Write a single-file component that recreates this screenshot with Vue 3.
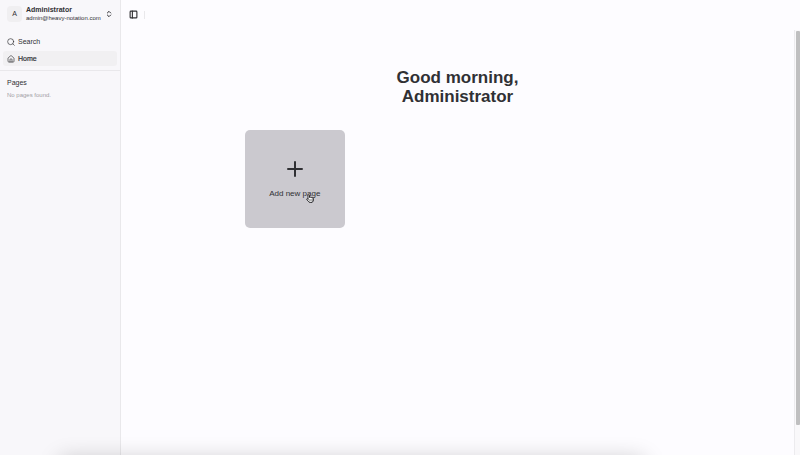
<script setup>
import { ref } from 'vue'

const user = { name: 'Administrator', email: 'admin@heavy-notation.com' }
const pages = ref([])
const sidebarOpen = ref(true)

function addPage() {
  pages.value.push({ id: pages.value.length + 1, title: 'Untitled' })
}
</script>

<template>
  <div class="app">
    <aside v-show="sidebarOpen" class="sidebar">
      <button class="account" type="button">
        <span class="avatar">{{ user.name[0] }}</span>
        <span class="identity">
          <strong class="name">{{ user.name }}</strong>
          <span class="email">{{ user.email }}</span>
        </span>
        <svg class="chevrons" viewBox="0 0 24 24"><path d="m7 15 5 5 5-5M7 9l5-5 5 5" /></svg>
      </button>
      <nav class="nav">
        <button class="item" type="button">
          <svg viewBox="0 0 24 24"><circle cx="11" cy="11" r="9" /><path d="m22 22-4.300-4.300" /></svg>
          <span>Search</span>
        </button>
        <a class="item active" href="#">
          <svg viewBox="0 0 24 24">
            <path d="M15 21v-8a1 1 0 0 0-1-1h-4a1 1 0 0 0-1 1v8" />
            <path d="M3 10a2 2 0 0 1 .7-1.5l7-6a2 2 0 0 1 2.6 0l7 6A2 2 0 0 1 21 10v9a2 2 0 0 1-2 2H5a2 2 0 0 1-2-2z" />
          </svg>
          <span>Home</span>
        </a>
      </nav>
      <section class="pages">
        <h2>Pages</h2>
        <p v-if="!pages.length">No pages found.</p>
        <a v-for="page in pages" :key="page.id" class="item" href="#">{{ page.title }}</a>
      </section>
    </aside>

    <div class="body">
      <header class="topbar">
        <button class="toggle" type="button" aria-label="Toggle sidebar" @click="sidebarOpen = !sidebarOpen">
          <svg viewBox="0 0 24 24"><rect x="3" y="3" width="18" height="18" rx="2" /><path d="M9 3v18" /></svg>
        </button>
        <span class="separator"></span>
      </header>
      <div class="viewport">
        <main class="content">
          <h1>Good morning,<br />{{ user.name }}</h1>
          <div class="grid">
            <button class="card" type="button" @click="addPage">
              <svg class="plus" viewBox="0 0 24 24"><path d="M5 12h14M12 5v14" /></svg>
              <span class="label">Add new page</span>
              <svg class="pointer" viewBox="0 0 16 18">
                <path d="M4 10V3a1.5 1.5 0 0 1 3 0v4a1.4 1.4 0 0 1 2.700 0v.5a1.400 1.400 0 0 1 2.600.3v.6a1.300 1.300 0 0 1 2.400.4V12c0 3-1.700 5-4.700 5H8.500c-2 0-3-1-4-2.600L1.600 11c-.8-1.500 1-2.400 2.400-1z" />
                <path class="knuckles" d="M7.500 11v3M10 11v3M12.500 11v3" />
              </svg>
            </button>
          </div>
        </main>
        <div class="scrollbar"><div class="thumb"></div></div>
      </div>
    </div>
    <div class="shade"></div>
  </div>
</template>

<style>
body {
  background: #fdfcff;
}
</style>

<style scoped>
.app {
  position: relative;
  display: flex;
  min-height: 100vh;
  overflow: hidden;
  color: #303034;
  background: #fdfcff;
  font-family: "Liberation Sans", Arial, sans-serif;
  font-size: 7px;
  line-height: 9px;
}
h1,
h2,
p {
  margin: 0;
}
button {
  padding: 0;
  border: 0;
  color: inherit;
  background: none;
  font: inherit;
  text-align: left;
  cursor: pointer;
}
svg {
  flex: none;
  fill: none;
  stroke: currentColor;
  stroke-width: 2;
  stroke-linecap: round;
  stroke-linejoin: round;
}
.sidebar {
  display: flex;
  flex: none;
  flex-direction: column;
  width: 120px;
  border-right: 1px solid #e9e8eb;
  background: #f8f7fa;
}
.account {
  display: flex;
  align-items: center;
  gap: 4px;
  padding: 6px 7px;
}
.avatar {
  flex: none;
  width: 15px;
  border-radius: 4px;
  background: #f0eff1;
  line-height: 16px;
  text-align: center;
}
.identity {
  display: flex;
  flex: 1;
  flex-direction: column;
  min-width: 0;
  line-height: 8px;
}
.email {
  font-size: 6px;
}
.chevrons {
  width: 8px;
  height: 8px;
  stroke-width: 3;
}
.nav {
  display: flex;
  flex-direction: column;
  gap: 2px;
  padding: 6px 3px 4px;
  border-bottom: 1px solid #e9e8eb;
}
.item {
  display: flex;
  align-items: center;
  gap: 3px;
  padding: 3px 4px;
  border-radius: 3px;
  color: inherit;
  text-decoration: none;
}
.item svg {
  width: 8px;
  height: 8px;
  stroke-width: 2;
}
.active {
  background: #f1f0f2;
  -webkit-text-stroke: 0.2px currentColor;
}
.pages {
  display: flex;
  flex-direction: column;
  gap: 4px;
  padding: 7px;
}
.pages h2 {
  font-size: 7px;
  font-weight: 400;
}
.pages p {
  color: #a1a0a5;
  font-size: 6px;
}
.body {
  display: flex;
  flex: 1;
  flex-direction: column;
  min-width: 0;
}
.topbar {
  display: flex;
  align-items: center;
  gap: 6px;
  height: 29px;
  padding: 0 8px 1px;
}
.toggle,
.toggle svg {
  display: block;
  width: 9px;
  height: 9px;
}
.toggle svg {
  stroke-width: 3;
}
.separator {
  width: 1px;
  height: 8px;
  background: #e9e8eb;
}
.viewport {
  display: flex;
  flex: 1;
}
.content {
  flex: 1;
  padding: 38px 16px;
}
h1 {
  font-size: 17px;
  line-height: 19px;
  text-align: center;
}
.grid {
  display: grid;
  grid-template-columns: repeat(4, 1fr);
  gap: 8px;
  max-width: 426px;
  margin: 24px auto 0;
}
.card {
  position: relative;
  display: flex;
  flex-direction: column;
  align-items: center;
  gap: 8px;
  padding: 27px 4px 30px;
  border-radius: 5px;
  background: #cbc9cf;
  font-size: 8px;
}
.plus {
  width: 26px;
  height: 24px;
}
.pointer {
  position: absolute;
  top: 64px;
  left: 61px;
  width: 8px;
  height: 9px;
  fill: #ffffff;
  stroke: #29292d;
}
.knuckles {
  stroke-width: 1;
}
.scrollbar {
  width: 5px;
  padding-top: 1px;
  border-left: 1px solid #ecebee;
  background: #f9f8fa;
}
.thumb {
  width: 4px;
  height: 93%;
  margin-left: auto;
  border-radius: 1px;
  background: #bfbfc0;
}
.shade {
  position: absolute;
  right: 20%;
  bottom: -18px;
  left: 8%;
  height: 10px;
  box-shadow: 0 0 22px 4px rgba(0, 0, 0, 0.22);
  pointer-events: none;
}
</style>
